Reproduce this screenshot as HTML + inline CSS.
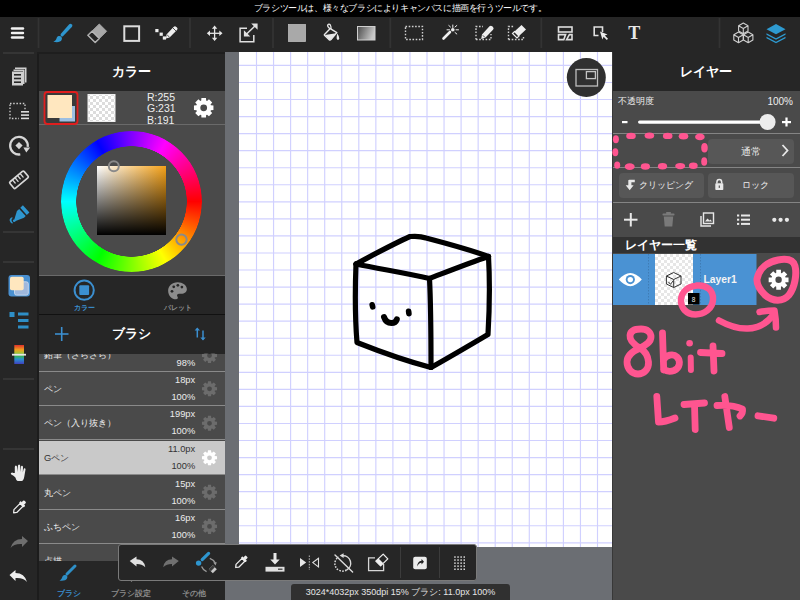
<!DOCTYPE html>
<html><head><meta charset="utf-8">
<style>
*{margin:0;padding:0;box-sizing:border-box}
html,body{width:800px;height:600px;overflow:hidden;background:#262626;font-family:"Liberation Sans",sans-serif;color:#fff}
.a{position:absolute}
svg{position:absolute;overflow:visible}
#status{left:0;top:0;width:800px;height:17px;background:#000;letter-spacing:-0.4px;font-size:8.7px;line-height:17px;text-align:center;color:#fff}
#toolbar{left:0;top:17px;width:800px;height:35px;background:#262626}
#sidebar{left:0;top:52px;width:38px;height:548px;background:#262626}
#lpanel{left:38px;top:52px;width:187px;height:548px;background:#4a4a4a;overflow:hidden}
#gutter{left:225px;top:52px;width:387px;height:548px;background:#6b6e73}
#canvas{left:239px;top:52px;width:373px;height:495px;background-color:#fff;overflow:hidden}
#grid{position:absolute;left:2px;top:0;width:371px;height:495px;
 background-image:linear-gradient(to right, #d0d0ff 1.5px, transparent 1.5px),linear-gradient(to bottom, #d0d0ff 1.5px, transparent 1.5px);
 background-size:17.05px 17.05px;background-position:14.75px 12.5px}
#rpanel{left:612px;top:52px;width:188px;height:548px;background:#4a4a4a;overflow:hidden}
.hdr{position:absolute;left:0;background:#262626;color:#fff;font-weight:bold;text-align:center}
.sep{position:absolute;left:0;height:1.4px;background:#848484}
.item{position:absolute;left:0;width:187px;height:34px;background:#4a4a4a;border-bottom:1px solid #8a8a8a;font-size:9.3px;color:#ececec}
.item.sel{background:#c9c9c9;color:#333}
.item .nm{position:absolute;left:6px;top:11px;white-space:nowrap}
.item .n1{position:absolute;right:29.8px;top:3px;text-align:right;font-size:9.3px}
.item .n2{position:absolute;right:29.8px;top:20px;text-align:right;font-size:9.3px}
.btn{position:absolute;background:#575757;border-radius:4px;font-size:11px;color:#eee}
#ftool{left:118px;top:544px;width:359px;height:37px;background:#262626;border:1px solid #7a7a7a;border-radius:3px;z-index:5}
#info{left:291px;top:584px;width:219px;height:16px;background:#303030;border-radius:3px 3px 0 0;font-size:9px;line-height:16px;text-align:center;color:#e6e6e6;z-index:5;white-space:nowrap}
#btabs{left:38px;top:561px;width:187px;height:39px;background:#262626}
</style></head><body>
<div id="status" class="a">ブラシツールは、様々なブラシによりキャンバスに描画を行うツールです。</div>
<div id="toolbar" class="a"></div>
<div id="sidebar" class="a"></div>
<div id="lpanel" class="a">
  <div class="hdr" style="top:0;width:187px;height:39px;font-size:13px;line-height:39px">カラー</div>
  <div class="sep" style="top:72px;width:187px;background:#6a6a6a"></div>
  <div class="a" style="left:109px;top:39.5px;font-size:10.5px;line-height:11.6px;color:#eee">R:255<br>G:231<br>B:191</div>
  <div class="hdr" style="top:224px;width:187px;height:38px;"></div>
  <div class="sep" style="top:223px;width:187px;background:#6a6a6a"></div>
  <div class="a" style="left:0;top:251px;width:93px;text-align:center;font-size:7.1px;font-weight:bold;color:#3b8fd0">カラー</div>
  <div class="a" style="left:93px;top:251px;width:94px;text-align:center;font-size:7.1px;font-weight:bold;color:#8c8c8c">パレット</div>
  <div class="sep" style="top:262px;width:187px;background:#111"></div>
  <div class="hdr" style="top:263px;width:187px;height:39px;font-size:12.5px;line-height:39px">ブラシ</div>
  <div class="a" style="left:0;top:302px;width:187px;height:207px;overflow:hidden">
  <div class="item" style="top:-16px"><span class="nm">鉛筆（さらさら）</span><span class="n2">98%</span></div>
  <div class="item" style="top:18px"><span class="nm">ペン</span><span class="n1">18px</span><span class="n2">100%</span></div>
  <div class="item" style="top:52px"><span class="nm">ペン（入り抜き）</span><span class="n1">199px</span><span class="n2">100%</span></div>
  <div class="item sel" style="top:87px"><span class="nm">Gペン</span><span class="n1">11.0px</span><span class="n2">100%</span></div>
  <div class="item" style="top:122px"><span class="nm">丸ペン</span><span class="n1">15px</span><span class="n2">100%</span></div>
  <div class="item" style="top:156px"><span class="nm">ふちペン</span><span class="n1">16px</span><span class="n2">100%</span></div>
  <div class="item" style="top:190px"><span class="nm">点描</span></div>
  </div>
</div>
<div id="btabs" class="a">
  <div class="a" style="left:0;top:28px;width:62px;text-align:center;font-size:7.5px;font-weight:bold;color:#3b8fd0">ブラシ</div>
  <div class="a" style="left:62px;top:28px;width:62px;text-align:center;font-size:7.5px;font-weight:bold;color:#8c8c8c">ブラシ設定</div>
  <div class="a" style="left:124px;top:28px;width:63px;text-align:center;font-size:7.5px;font-weight:bold;color:#8c8c8c">その他</div>
</div>
<div class="a" style="left:61px;top:131px;width:141px;height:141px;border-radius:50%;background:conic-gradient(hsl(270,100%,50%) 0deg,hsl(300,100%,50%) 30deg,hsl(330,100%,50%) 60deg,hsl(0,100%,50%) 90deg,hsl(30,100%,50%) 120deg,hsl(60,100%,50%) 150deg,hsl(90,100%,50%) 180deg,hsl(120,100%,50%) 210deg,hsl(150,100%,50%) 240deg,hsl(180,100%,50%) 270deg,hsl(210,100%,50%) 300deg,hsl(240,100%,50%) 330deg,hsl(270,100%,50%) 360deg);-webkit-mask:radial-gradient(circle,transparent 55px,#000 55.5px);mask:radial-gradient(circle,transparent 55px,#000 55.5px)"></div>
<div class="a" style="left:97px;top:166px;width:69px;height:69px;background:linear-gradient(to bottom,rgba(0,0,0,0),#000),linear-gradient(to right,#fff,#f5a219)"></div>
<div id="gutter" class="a"></div>
<div id="canvas" class="a"><svg width="373" height="495" style="position:absolute;left:0;top:0"><g stroke="#d0d0ff" stroke-width="1.15"><line x1="17.50" y1="0" x2="17.50" y2="495"/><line x1="34.55" y1="0" x2="34.55" y2="495"/><line x1="51.60" y1="0" x2="51.60" y2="495"/><line x1="68.65" y1="0" x2="68.65" y2="495"/><line x1="85.70" y1="0" x2="85.70" y2="495"/><line x1="102.75" y1="0" x2="102.75" y2="495"/><line x1="119.80" y1="0" x2="119.80" y2="495"/><line x1="136.85" y1="0" x2="136.85" y2="495"/><line x1="153.90" y1="0" x2="153.90" y2="495"/><line x1="170.95" y1="0" x2="170.95" y2="495"/><line x1="188.00" y1="0" x2="188.00" y2="495"/><line x1="205.05" y1="0" x2="205.05" y2="495"/><line x1="222.10" y1="0" x2="222.10" y2="495"/><line x1="239.15" y1="0" x2="239.15" y2="495"/><line x1="256.20" y1="0" x2="256.20" y2="495"/><line x1="273.25" y1="0" x2="273.25" y2="495"/><line x1="290.30" y1="0" x2="290.30" y2="495"/><line x1="307.35" y1="0" x2="307.35" y2="495"/><line x1="324.40" y1="0" x2="324.40" y2="495"/><line x1="341.45" y1="0" x2="341.45" y2="495"/><line x1="358.50" y1="0" x2="358.50" y2="495"/><line x1="0" y1="13.40" x2="373" y2="13.40"/><line x1="0" y1="30.45" x2="373" y2="30.45"/><line x1="0" y1="47.50" x2="373" y2="47.50"/><line x1="0" y1="64.55" x2="373" y2="64.55"/><line x1="0" y1="81.60" x2="373" y2="81.60"/><line x1="0" y1="98.65" x2="373" y2="98.65"/><line x1="0" y1="115.70" x2="373" y2="115.70"/><line x1="0" y1="132.75" x2="373" y2="132.75"/><line x1="0" y1="149.80" x2="373" y2="149.80"/><line x1="0" y1="166.85" x2="373" y2="166.85"/><line x1="0" y1="183.90" x2="373" y2="183.90"/><line x1="0" y1="200.95" x2="373" y2="200.95"/><line x1="0" y1="218.00" x2="373" y2="218.00"/><line x1="0" y1="235.05" x2="373" y2="235.05"/><line x1="0" y1="252.10" x2="373" y2="252.10"/><line x1="0" y1="269.15" x2="373" y2="269.15"/><line x1="0" y1="286.20" x2="373" y2="286.20"/><line x1="0" y1="303.25" x2="373" y2="303.25"/><line x1="0" y1="320.30" x2="373" y2="320.30"/><line x1="0" y1="337.35" x2="373" y2="337.35"/><line x1="0" y1="354.40" x2="373" y2="354.40"/><line x1="0" y1="371.45" x2="373" y2="371.45"/><line x1="0" y1="388.50" x2="373" y2="388.50"/><line x1="0" y1="405.55" x2="373" y2="405.55"/><line x1="0" y1="422.60" x2="373" y2="422.60"/><line x1="0" y1="439.65" x2="373" y2="439.65"/><line x1="0" y1="456.70" x2="373" y2="456.70"/><line x1="0" y1="473.75" x2="373" y2="473.75"/><line x1="0" y1="490.80" x2="373" y2="490.80"/></g></svg></div>
<div id="rpanel" class="a">
  <div class="hdr" style="top:0;width:188px;height:39px;font-size:13px;line-height:39px">レイヤー</div>
  <div class="a" style="left:6px;top:43px;font-size:9.3px;color:#eee">不透明度</div>
  <div class="a" style="right:7px;top:43.5px;font-size:10px;color:#eee">100%</div>
  <div class="sep" style="top:81px;width:188px"></div>
  <div class="btn" style="left:96px;top:87px;width:86px;height:25px;text-align:center;line-height:25px;font-size:10px">通常</div>
  <div class="sep" style="top:115px;width:188px"></div>
  <div class="btn" style="left:7px;top:121px;width:85px;height:25px;line-height:25px;font-size:9.3px;padding-left:20px;white-space:nowrap">クリッピング</div>
  <div class="btn" style="left:96px;top:121px;width:86px;height:25px;line-height:25px;font-size:9.3px;padding-left:34px">ロック</div>
  <div class="sep" style="top:150px;width:188px"></div>
  <div class="a" style="left:0;top:185px;width:188px;height:16px;background:#323232"></div>
  <div class="a" style="left:13px;top:185px;font-size:12.2px;font-weight:bold;color:#fff">レイヤー一覧</div>
  <div class="a" style="left:0;top:201.7px;width:145px;height:51.3px;background:#4a92d3"></div>
  <div class="a" style="left:42.5px;top:201.7px;width:38.8px;height:51.3px;background-color:#fff;background-image:linear-gradient(45deg,#e6e6e6 25%,transparent 25%,transparent 75%,#e6e6e6 75%),linear-gradient(45deg,#e6e6e6 25%,transparent 25%,transparent 75%,#e6e6e6 75%);background-size:6px 6px;background-position:0 0,3px 3px"></div>
  <div class="a" style="left:91.5px;top:222px;font-size:10.3px;font-weight:bold;color:#f4f4f4">Layer1</div>
</div>
<div class="a" style="left:612px;top:52px;width:1px;height:548px;background:#383838"></div>
<div class="a" style="left:37px;top:52px;width:1.5px;height:548px;background:#1c1c1c"></div>
<div class="a" style="left:37px;top:52px;width:188px;height:1.5px;background:#1e1e1e"></div>
<svg class="a" id="ov" width="800" height="600" style="left:0;top:0" viewBox="0 0 800 600">
<!-- toolbar separators -->
<g stroke="#333" stroke-width="1.8">
<line x1="38.5" y1="18" x2="38.5" y2="48"/><line x1="190" y1="18" x2="190" y2="48"/>
<line x1="273" y1="18" x2="273" y2="48"/><line x1="390.3" y1="18" x2="390.3" y2="48"/>
<line x1="541.3" y1="18" x2="541.3" y2="48"/><line x1="719.5" y1="18" x2="719.5" y2="48"/>
</g>
<!-- hamburger -->
<g stroke="#f2f2f2" stroke-width="2.4" stroke-linecap="round">
<line x1="12" y1="28.5" x2="23" y2="28.5"/><line x1="12" y1="33" x2="23" y2="33"/><line x1="12" y1="37.5" x2="23" y2="37.5"/>
</g>
<!-- brush blue -->
<g fill="#2e96cf">
<path d="M69.2 24.2 Q70.8 23.2 71.9 24.4 Q73 25.7 71.8 27 L63.2 36 Q62 37 61 36 Q60 35 60.9 33.8Z"/>
<path d="M58.8 36 C61.5 35.8 62.6 38 61.6 40 C60.6 42 57.5 42.7 53.3 41.7 C55.5 40.8 56.2 39.4 56.5 38.4 C56.9 37 57.6 36.1 58.8 36Z"/>
</g>
<!-- eraser -->
<path d="M99.3 24 L106.6 31.3 L99.3 38.6 L92 31.3Z" fill="#a8a8a8"/>
<path d="M92 31.3 L99.3 38.6 L95.2 42.5 L87.9 35.2Z" fill="none" stroke="#b8b8b8" stroke-width="1.4" stroke-linejoin="round"/>
<path d="M99.3 24 L106.6 31.3 L95.2 42.5 L87.9 35.2Z" fill="none" stroke="#a8a8a8" stroke-width="1" stroke-linejoin="round"/>
<!-- rectangle -->
<rect x="124.3" y="26.3" width="14.8" height="14.6" fill="none" stroke="#dcdcdc" stroke-width="2"/>
<!-- dotted + pen -->
<g fill="#eee">
<rect x="155.3" y="29" width="3.2" height="3.2"/><rect x="159.6" y="32.6" width="3.2" height="3.2"/><rect x="162.8" y="36.4" width="3.2" height="3.2"/>
<path d="M166.5 34.5 L173.8 26.8 Q175 25.6 176.3 26.9 L177 27.6 Q178.2 28.9 177 30.1 L169.6 37.6 L166 38.6Z" fill="#eee"/><line x1="167.2" y1="35" x2="169.6" y2="37.2" stroke="#262626" stroke-width="0.8"/><line x1="172.8" y1="27.8" x2="176" y2="31" stroke="#262626" stroke-width="0.8"/>
</g>
<!-- move -->
<g stroke="#e6e6e6" stroke-width="1.3" fill="none">
<line x1="209" y1="33.3" x2="220.5" y2="33.3"/><line x1="214.6" y1="27.5" x2="214.6" y2="39"/>
</g>
<g fill="#e6e6e6">
<path d="M206.8 33.3 L210 30.6 L210 36Z M222.5 33.3 L219.3 30.6 L219.3 36Z M214.6 25.6 L211.9 28.8 L217.3 28.8Z M214.6 41 L211.9 37.8 L217.3 37.8Z"/>
</g>
<!-- transform -->
<g stroke="#e0e0e0" stroke-width="1.5" fill="none">
<path d="M247 28.3 L240.1 28.3 L240.1 41.8 L253.8 41.8 L253.8 35"/>
<path d="M245 35.5 L256.5 24.5"/>
</g>
<g fill="#e0e0e0"><path d="M257.6 23.4 L257.6 29.8 L251.2 23.4Z M243.9 36.6 L243.9 30.2 L250.3 36.6Z"/></g>
<!-- gray square -->
<rect x="288.5" y="24.5" width="17" height="17" fill="#a9a9a9" stroke="#bbb" stroke-width="0.8"/>
<!-- bucket -->
<path d="M324.5 34.5 L330.3 28.6 L336.8 32.6 L331 39.6 Q330.2 40.4 329.2 39.8 L325 35.8 Q324 35 324.5 34.5Z" fill="none" stroke="#e8e8e8" stroke-width="1.4" stroke-linejoin="round"/>
<path d="M325 35 L336.2 33.2 L331 39.6 Q330.2 40.4 329.2 39.8Z" fill="#e8e8e8"/>
<path d="M330 28.8 Q327 26.5 327.8 24.8 Q329 23.3 330.3 25 Q331.2 26.5 331 29" fill="none" stroke="#e8e8e8" stroke-width="1.3"/>
<path d="M337.2 33.5 Q339.8 36.8 339.3 38.8 Q338.7 40.3 337.4 39.8 Q336.2 39 336.7 36.8Z" fill="#e8e8e8"/>
<!-- gradient -->
<defs><linearGradient id="gr" x1="0" x2="1" y1="0" y2="0.3"><stop offset="0" stop-color="#4a4a4a"/><stop offset="1" stop-color="#c8c8c8"/></linearGradient></defs>
<rect x="357.5" y="26.5" width="17.5" height="13.5" fill="url(#gr)" stroke="#cfcfcf" stroke-width="1"/>
<!-- dashed rect -->
<rect x="405.5" y="26.5" width="17" height="13" fill="none" stroke="#cfcfcf" stroke-width="1.4" stroke-dasharray="1.6 1.6"/>
<!-- wand -->
<g stroke="#eee" stroke-linecap="round">
<line x1="443.5" y1="38.5" x2="450" y2="32" stroke-width="2.6"/>
<g stroke-width="1"><line x1="452.8" y1="25" x2="452.8" y2="27.5"/><line x1="456" y1="29.8" x2="458.5" y2="29.8"/><line x1="447" y1="29.8" x2="449.5" y2="29.8"/><line x1="455" y1="27" x2="456.8" y2="25.5"/><line x1="455" y1="32.5" x2="456.8" y2="34"/><line x1="450.5" y1="27" x2="448.8" y2="25.5"/></g>
<circle cx="452.8" cy="29.8" r="1.8" fill="#eee" stroke="none"/>
</g>
<!-- select pen -->
<path d="M476 39.5 L476 26.5 L483 26.5 M476 39.5 L491 39.5 L491 34" fill="none" stroke="#cfcfcf" stroke-width="1.4" stroke-dasharray="1.6 1.6"/>
<path d="M482 34.5 L489.5 26.3 Q490.8 25 492.2 26.3 L493 27.1 Q494.3 28.5 493 29.8 L485.3 37.8 L481.2 39Z" fill="#eee"/><line x1="482.8" y1="35.3" x2="485" y2="37.5" stroke="#262626" stroke-width="0.8"/>
<!-- select eraser -->
<path d="M508.5 39.5 L508.5 26.5 L514 26.5 M508.5 39.5 L523.5 39.5 L523.5 36" fill="none" stroke="#cfcfcf" stroke-width="1.4" stroke-dasharray="1.6 1.6"/>
<path d="M521.5 25 L526 29.5 L519 36 L514.5 31.5Z" fill="#eee"/>
<path d="M514.5 31.5 L519 36 L517 38 L512.5 33.5Z" fill="none" stroke="#eee" stroke-width="1.2"/>
<!-- layout -->
<g fill="none" stroke="#dedede" stroke-width="1.6">
<rect x="558.5" y="27" width="13.5" height="5"/>
<path d="M558.5 34.6 L565.6 34.6 L563.8 39.6 L558.5 39.6Z M569.4 34.6 L572 34.6 L572 39.6 L566.6 39.6Z"/>
</g>
<!-- select arrow -->
<path d="M599.5 27 L594.2 27 L594.2 35.5 L598.5 35.5 M602.5 32 L602.5 27 L599.5 27" fill="none" stroke="#e0e0e0" stroke-width="1.6"/>
<path d="M600 31.5 L607.5 34.5 L604.8 35.6 L608 38.8 L606.8 40 L603.6 36.8 L602.4 39.5Z" fill="#eee"/>
<!-- T -->
<text x="634.3" y="39" font-family="Liberation Serif" font-weight="bold" font-size="18" fill="#e8e8e8" text-anchor="middle">T</text>
<!-- cubes -->
<g fill="none" stroke="#cfcfcf" stroke-width="1.1" stroke-linejoin="round">
<path d="M743.3 23 L748 25.7 L748 31 L743.3 33.7 L738.6 31 L738.6 25.7Z M738.6 25.7 L743.3 28.4 L748 25.7 M743.3 28.4 L743.3 33.7"/>
<path d="M738.5 32 L743.2 34.7 L743.2 40 L738.5 42.7 L733.8 40 L733.8 34.7Z M733.8 34.7 L738.5 37.4 L743.2 34.7 M738.5 37.4 L738.5 42.7"/>
<path d="M748.2 32 L752.9 34.7 L752.9 40 L748.2 42.7 L743.5 40 L743.5 34.7Z M743.5 34.7 L748.2 37.4 L752.9 34.7 M748.2 37.4 L748.2 42.7"/>
</g>
<!-- layers blue -->
<g fill="#2e9ad0">
<path d="M776 24 L785.5 29.2 L776 34.2 L766.5 29.2Z"/>
<path d="M766.5 33.3 L776 38.3 L785.5 33.3 L785.5 34.8 L776 39.8 L766.5 34.8Z"/>
<path d="M766.5 36.8 L776 41.8 L785.5 36.8 L785.5 38.3 L776 43.3 L766.5 38.3Z"/>
</g>
<!-- sidebar separators -->
<g fill="#353535">
<rect x="3" y="52" width="31" height="2"/>
<rect x="3" y="231" width="31" height="2"/><rect x="3" y="261" width="31" height="2"/>
<rect x="3" y="378" width="31" height="2"/><rect x="3" y="448" width="31" height="2"/>
</g>
<!-- pages icon -->
<g fill="#cfcfcf">
<path d="M15 67.5 L26.5 67.5 L26.5 82.5 L25 82.5 L25 69 L15 69Z"/>
<path d="M13.5 69.5 L24.5 69.5 L24.5 84 L23 84 L23 71 L13.5 71Z"/>
<rect x="12" y="71.5" width="11" height="14"/>
</g>
<g fill="#262626"><rect x="14" y="74" width="7" height="1.6"/><rect x="14" y="77.7" width="7" height="1.6"/><rect x="14" y="81.4" width="7" height="1.6"/></g>
<!-- selection list icon -->
<rect x="10" y="103.5" width="15" height="15" fill="none" stroke="#cfcfcf" stroke-width="1.3" stroke-dasharray="1.5 1.7"/>
<rect x="19" y="110" width="10" height="10" fill="#262626"/>
<g fill="#dcdcdc"><rect x="21" y="111" width="8" height="1.6"/><rect x="21" y="114.3" width="8" height="1.6"/><rect x="21" y="117.6" width="8" height="1.6"/></g>
<!-- rotate icon -->
<path d="M20.3 154.4 A8.8 8.8 0 1 1 27.7 146.8" fill="none" stroke="#d6d6d6" stroke-width="2.3"/>
<path d="M23.4 147.6 L30.2 147.6 L26.3 152.6Z" fill="#d6d6d6"/>
<path d="M19 142 L22.6 145.6 L19 149.2 L15.4 145.6Z" fill="#d6d6d6"/>
<!-- ruler -->
<g transform="translate(19 179.8) rotate(-40)">
<rect x="-9.3" y="-4.2" width="18.6" height="8.4" rx="1.3" fill="none" stroke="#d8d8d8" stroke-width="1.7"/>
<g stroke="#d8d8d8" stroke-width="1.3" stroke-linecap="round"><line x1="-5" y1="-3.5" x2="-5" y2="0"/><line x1="-1.7" y1="-3.5" x2="-1.7" y2="0.6"/><line x1="1.6" y1="-3.5" x2="1.6" y2="0"/><line x1="4.9" y1="-3.5" x2="4.9" y2="0.6"/></g>
</g>
<!-- pen marker blue -->
<g fill="#2e96cf" transform="translate(-0.3 1.2)">
<path d="M17.2 209.8 L19.5 207.8 L26 214.8 L24.3 216.6 L15.3 220 L14.4 219Z"/>
<path d="M20.6 206.6 L23.2 204 L29.7 211.2 L27.1 213.8Z"/>
<circle cx="14.5" cy="219.6" r="1.3"/>
<path d="M12.5 216 Q9.5 217 10 219.5 Q10.6 221.5 12.5 222.5 L13.2 221.6 Q11.8 220.2 11.8 218.8 Q11.9 217.5 13 216.8Z"/>
</g>
<!-- color icon -->
<rect x="8.5" y="275" width="21.5" height="21.5" rx="3" fill="#4a90d0"/>
<rect x="14.5" y="281.8" width="13.8" height="13.3" rx="2" fill="#9fb8dd" stroke="#c9daf0" stroke-width="0.9"/>
<rect x="10" y="276.7" width="13.7" height="13.6" rx="1.8" fill="#ffe7bf"/>
<!-- list icon -->
<g fill="#2e8fc7">
<rect x="9.5" y="312" width="5" height="5"/>
<rect x="18" y="312.5" width="10.5" height="3"/><rect x="18" y="319" width="10.5" height="3"/><rect x="18" y="325.5" width="10.5" height="3"/>
</g>
<!-- rainbow -->
<defs><linearGradient id="rb" x1="0" x2="0" y1="0" y2="1">
<stop offset="0" stop-color="#e0302a"/><stop offset="0.25" stop-color="#f0a020"/><stop offset="0.4" stop-color="#b0c030"/><stop offset="0.6" stop-color="#30b060"/><stop offset="0.75" stop-color="#2a90d0"/><stop offset="1" stop-color="#4040c0"/></linearGradient></defs>
<rect x="14.3" y="345" width="9.7" height="19" fill="url(#rb)"/>
<rect x="12" y="353.8" width="14" height="1.8" fill="#e8e8e8"/>
<!-- hand -->
<path d="M14.8 473 L14.8 467.2 Q14.8 465.6 15.9 465.6 Q17 465.6 17.1 467.2 L17.5 472 L17.9 466 Q18 464.4 19.1 464.4 Q20.2 464.4 20.2 466 L20.3 472 L20.9 467.2 Q21.1 465.7 22.1 465.8 Q23.1 465.9 23 467.3 L22.8 472.5 L23.6 469.2 Q23.9 468 24.8 468.2 Q25.7 468.4 25.5 469.6 L24.3 476.5 Q23.6 480.8 21.6 481 L17.6 481 Q16.1 480.6 15.4 477.6 Q13.6 475.4 11.3 474.4 Q10.3 473.7 11.1 472.9 Q12 472.3 13.3 472.9Z" fill="#ececec"/>
<!-- eyedropper sidebar -->
<g transform="translate(19.1 507.3) rotate(45) scale(0.88)">
<path d="M-2.3 -4 L2.3 -4 L2.3 6 L0 8.8 L-2.3 6Z" fill="none" stroke="#eee" stroke-width="1.4" stroke-linejoin="round"/>
<rect x="-3.8" y="-6.2" width="7.6" height="2.6" rx="0.8" fill="#eee"/>
<rect x="-2" y="-9.6" width="4" height="4" rx="1.2" fill="#eee"/>
</g>
<!-- redo gray -->
<path d="M28 541 L22 536 L22 539 Q13 539 10.5 548 Q14 543.5 22 544 L22 547Z" fill="#6e6e6e"/>
<!-- undo white -->
<path d="M9.5 575 L15.5 570 L15.5 573 Q24.5 573 27 582 Q23.5 577.5 15.5 578 L15.5 581Z" fill="#eeeeee"/>
<!-- color swatch -->
<rect x="44.5" y="92" width="33" height="32" rx="3" fill="#3a3a3a" stroke="#e01e1e" stroke-width="1.8"/>
<rect x="59.5" y="106" width="15.5" height="15.5" fill="#9dbfe2"/>
<rect x="47.5" y="95" width="24.5" height="23" fill="#ffe7bf"/>
<!-- transparent swatch -->
<defs><pattern id="chk" width="6" height="6" patternUnits="userSpaceOnUse"><rect width="6" height="6" fill="#fff"/><rect width="3" height="3" fill="#dcdcdc"/><rect x="3" y="3" width="3" height="3" fill="#dcdcdc"/></pattern></defs>
<rect x="88" y="94.5" width="27" height="27" fill="url(#chk)" stroke="#f0f0f0" stroke-width="1"/>
<!-- gear color -->
<g id="gear" transform="translate(203.7 107.8)">
<path fill="#fff" d="M-1.8 -9.5 L1.8 -9.5 L2.4 -6.8 L4.6 -5.9 L6.9 -7.4 L9.4 -4.9 L7.9 -2.6 L8.8 -0.4 L11.5 0.2 L11.5 0 Z" opacity="0"/>
</g>
<!-- color wheel -->
<circle cx="113.8" cy="166.3" r="5" fill="none" stroke="#8a8a8a" stroke-width="2"/>
<circle cx="181.5" cy="239.6" r="5.2" fill="none" stroke="#8a8a8a" stroke-width="2"/>
<!-- tab icons -->
<circle cx="84.2" cy="290.2" r="9.6" fill="none" stroke="#3b8fd0" stroke-width="2"/>
<rect x="79.3" y="285.3" width="9.8" height="9.8" rx="1" fill="#3b8fd0"/>
<g transform="translate(177.5 290.8) scale(0.86) translate(-177.9 -290.9)"><path d="M178 281 C171.5 281 167 285.5 167 290.8 C167 296.5 171.5 300.8 176 300.8 C178.5 300.8 178.8 299 177.8 297.6 C176.8 296 177.5 294.2 179.8 294.2 L182.3 294.2 C186 294.2 188.8 292.2 188.8 289 C188.8 284.5 184 281 178 281Z" fill="#8c8c8c"/>
<g fill="#262626"><circle cx="171.5" cy="291.5" r="1.6"/><circle cx="173.5" cy="286.2" r="1.6"/><circle cx="178.3" cy="284.5" r="1.6"/><circle cx="183" cy="286.5" r="1.6"/></g></g>
<!-- brush header icons -->
<g stroke="#3b8fd0" stroke-width="1.6" fill="none">
<line x1="55" y1="334" x2="68.5" y2="334"/><line x1="61.7" y1="327" x2="61.7" y2="341"/>
<path d="M197.3 337.5 L197.3 328.5 M203 330.5 L203 339.5" stroke-width="1.5"/>
</g>
<g fill="#3b8fd0"><path d="M197.3 327.4 L194.6 330.6 L200 330.6Z M203 340.6 L200.3 337.4 L205.7 337.4Z"/></g>
<!-- bottom brush tab icon -->
<g fill="#2e8fc7">
<line x1="75" y1="566" x2="67" y2="574" stroke="#2e8fc7" stroke-width="3" stroke-linecap="round"/>
<path d="M64.5 575 C67 574.5 68 576.5 67 578.5 C66 580.5 63 581 59.5 580.5 C61.5 579.5 62 578 62.3 577 C62.7 576 63.3 575.2 64.5 575Z"/>
</g>
<path d="M129 579 L134 579 L131.5 582Z" fill="#8c8c8c"/>
<!-- canvas nav button -->
<circle cx="586.3" cy="77.5" r="19.5" fill="#303030"/>
<rect x="576" y="69.5" width="21.5" height="16.5" fill="none" stroke="#bdbdbd" stroke-width="1.3"/>
<rect x="586.4" y="71.6" width="9" height="7" fill="none" stroke="#c4c4c4" stroke-width="1.3"/>
<!-- cube drawing -->
<g fill="none" stroke="#000" stroke-width="5.2" stroke-linecap="round" stroke-linejoin="round">
<path d="M356 264 C375 254 393 244 410 236.5 C416 236 422 236.5 426 238 C447 243.5 468 249 488.5 256.5"/>
<path d="M356 264 C380 269 405 273 429.5 278.5 C449 271 469 263 488.5 256.5"/>
<path d="M356 264 C355 290 355 318 357 342.5 C381 352 406 361 431 367.5 C450 357 470 345 488 334.5 C489.5 309 490 283 488.5 256.5"/>
<path d="M429.5 278.5 C431 308 431 338 431 367.5"/>
</g>
<g stroke="#000" stroke-width="5.6" stroke-linecap="round" fill="none">
<line x1="372.2" y1="304.8" x2="372.7" y2="306.9"/>
<line x1="408.6" y1="311.2" x2="408.9" y2="313.6"/>
<path d="M384 317 Q386 323 391.5 323 Q395.5 323 396.8 319.4" stroke-width="6"/>
</g>
<!-- right panel: slider -->
<g fill="#fff">
<rect x="622" y="121" width="5.5" height="2.2"/>
<rect x="638" y="120.4" width="130" height="3.4" rx="1.7"/>
<rect x="782" y="121" width="9" height="2.2"/><rect x="785.4" y="117.5" width="2.2" height="9"/>
</g>
<circle cx="767.6" cy="122" r="8" fill="#ececec"/>
<path d="M782.5 145 L787.5 150.5 L782.5 156" fill="none" stroke="#e8e8e8" stroke-width="1.8"/>
<!-- clipping arrow icon -->
<path d="M628.3 180.3 Q628.5 179.8 629.5 179.8 L634.8 179.8 L634.8 182.3 L631.4 182.3 L631.4 185.2 L633.6 185.2 L629.7 190.3 L625.7 185.2 L628.3 185.2Z" fill="#e8e8e8"/>
<!-- lock -->
<rect x="715.3" y="183.2" width="8" height="6.8" rx="0.8" fill="#e8e8e8"/>
<path d="M716.9 183.5 L716.9 182.2 Q716.9 179.6 719.3 179.6 Q721.7 179.6 721.7 182.2 L721.7 183.5" fill="none" stroke="#e8e8e8" stroke-width="1.5"/>
<rect x="718.7" y="185.5" width="1.2" height="2.4" fill="#575757"/>
<!-- icon row -->
<g stroke="#e8e8e8" stroke-width="2">
<line x1="624" y1="219.7" x2="637.5" y2="219.7"/><line x1="630.8" y1="213" x2="630.8" y2="226.5"/>
</g>
<g fill="#7a7a7a">
<rect x="662.5" y="213.5" width="12" height="2" rx="0.8"/><rect x="666" y="212" width="5" height="2" rx="0.8"/>
<path d="M663.8 216.5 L673.2 216.5 L672.3 226.5 L664.7 226.5Z"/>
</g>
<g fill="none" stroke="#e8e8e8" stroke-width="1.4">
<path d="M701 216 L701 226 L711 226"/>
<rect x="703.5" y="213" width="10" height="10.5"/>
</g>
<path d="M705 221.5 L707.5 218.5 L709.5 220.5 L710.5 219.5 L712 221.5Z" fill="#e8e8e8"/>
<g fill="#e8e8e8">
<rect x="737" y="214.5" width="2.2" height="2"/><rect x="737" y="218.7" width="2.2" height="2"/><rect x="737" y="222.9" width="2.2" height="2"/>
<rect x="741" y="214.5" width="9" height="2"/><rect x="741" y="218.7" width="9" height="2"/><rect x="741" y="222.9" width="9" height="2"/>
<circle cx="774.3" cy="219.8" r="2.1"/><circle cx="780.6" cy="219.8" r="2.1"/><circle cx="786.9" cy="219.8" r="2.1"/>
</g>
<!-- layer row extras -->
<rect x="756.5" y="253" width="43.5" height="52" fill="#4a4a4a"/>
<g stroke="#3f7cb5" stroke-width="1" stroke-dasharray="1.5 1.5"><line x1="648.5" y1="254" x2="648.5" y2="305"/><line x1="700.5" y1="254" x2="700.5" y2="305"/></g>
<path d="M618.8 279.6 Q630.3 266.5 641.8 279.6 Q630.3 292.7 618.8 279.6Z" fill="#fff"/>
<circle cx="630.3" cy="279.6" r="4.6" fill="#4a92d3"/>
<circle cx="630.3" cy="279.6" r="2.7" fill="#fff"/>
<g fill="none" stroke="#333" stroke-width="1" stroke-linejoin="round">
<path d="M673.7 272.5 L681 276 L681 284 L673.7 287.5 L666.4 284 L666.4 276 Z M666.4 276 L673.7 279.5 L681 276 M673.7 279.5 L673.7 287.5"/>
<path d="M668.5 282 L670.5 284.3 L673 281"/>
</g>
<rect x="688" y="293" width="11.5" height="11.5" fill="#000"/>
<text x="693.6" y="301.8" font-size="6.5" fill="#eee" text-anchor="middle">8</text>
<path fill-rule="evenodd" fill="#fff" d="M210.89 105.34 L213.44 105.52 L213.44 110.08 L210.89 110.26 L210.53 111.14 L212.20 113.07 L208.97 116.30 L207.04 114.63 L206.16 114.99 L205.98 117.54 L201.42 117.54 L201.24 114.99 L200.36 114.63 L198.43 116.30 L195.20 113.07 L196.87 111.14 L196.51 110.26 L193.96 110.08 L193.96 105.52 L196.51 105.34 L196.87 104.46 L195.20 102.53 L198.43 99.30 L200.36 100.97 L201.24 100.61 L201.42 98.06 L205.98 98.06 L206.16 100.61 L207.04 100.97 L208.97 99.30 L212.20 102.53 L210.53 104.46Z M200.30 107.80 a3.40 3.40 0 1 0 6.80 0 a3.40 3.40 0 1 0 -6.80 0Z"/>
<path fill-rule="evenodd" fill="#fff" d="M785.51 277.43 L788.53 277.47 L788.53 282.13 L785.51 282.17 L785.16 283.01 L787.27 285.18 L783.98 288.47 L781.81 286.36 L780.97 286.71 L780.93 289.73 L776.27 289.73 L776.23 286.71 L775.39 286.36 L773.22 288.47 L769.93 285.18 L772.04 283.01 L771.69 282.17 L768.67 282.13 L768.67 277.47 L771.69 277.43 L772.04 276.59 L769.93 274.42 L773.22 271.13 L775.39 273.24 L776.23 272.89 L776.27 269.87 L780.93 269.87 L780.97 272.89 L781.81 273.24 L783.98 271.13 L787.27 274.42 L785.16 276.59Z M775.40 279.80 a3.20 3.20 0 1 0 6.40 0 a3.20 3.20 0 1 0 -6.40 0Z"/>
<defs><clipPath id="lc"><rect x="38" y="353.5" width="187" height="207.5"/></clipPath></defs><g clip-path="url(#lc)"><path fill-rule="evenodd" fill="#6c6c6c" d="M214.91 353.71 L217.05 353.97 L217.05 357.03 L214.91 357.29 L214.59 358.06 L215.92 359.75 L213.75 361.92 L212.06 360.59 L211.29 360.91 L211.03 363.05 L207.97 363.05 L207.71 360.91 L206.94 360.59 L205.25 361.92 L203.08 359.75 L204.41 358.06 L204.09 357.29 L201.95 357.03 L201.95 353.97 L204.09 353.71 L204.41 352.94 L203.08 351.25 L205.25 349.08 L206.94 350.41 L207.71 350.09 L207.97 347.95 L211.03 347.95 L211.29 350.09 L212.06 350.41 L213.75 349.08 L215.92 351.25 L214.59 352.94Z M207.10 355.50 a2.40 2.40 0 1 0 4.80 0 a2.40 2.40 0 1 0 -4.80 0Z"/>
<path fill-rule="evenodd" fill="#6c6c6c" d="M214.91 387.01 L217.05 387.27 L217.05 390.33 L214.91 390.59 L214.59 391.36 L215.92 393.05 L213.75 395.22 L212.06 393.89 L211.29 394.21 L211.03 396.35 L207.97 396.35 L207.71 394.21 L206.94 393.89 L205.25 395.22 L203.08 393.05 L204.41 391.36 L204.09 390.59 L201.95 390.33 L201.95 387.27 L204.09 387.01 L204.41 386.24 L203.08 384.55 L205.25 382.38 L206.94 383.71 L207.71 383.39 L207.97 381.25 L211.03 381.25 L211.29 383.39 L212.06 383.71 L213.75 382.38 L215.92 384.55 L214.59 386.24Z M207.10 388.80 a2.40 2.40 0 1 0 4.80 0 a2.40 2.40 0 1 0 -4.80 0Z"/>
<path fill-rule="evenodd" fill="#6c6c6c" d="M214.91 421.51 L217.05 421.77 L217.05 424.83 L214.91 425.09 L214.59 425.86 L215.92 427.55 L213.75 429.72 L212.06 428.39 L211.29 428.71 L211.03 430.85 L207.97 430.85 L207.71 428.71 L206.94 428.39 L205.25 429.72 L203.08 427.55 L204.41 425.86 L204.09 425.09 L201.95 424.83 L201.95 421.77 L204.09 421.51 L204.41 420.74 L203.08 419.05 L205.25 416.88 L206.94 418.21 L207.71 417.89 L207.97 415.75 L211.03 415.75 L211.29 417.89 L212.06 418.21 L213.75 416.88 L215.92 419.05 L214.59 420.74Z M207.10 423.30 a2.40 2.40 0 1 0 4.80 0 a2.40 2.40 0 1 0 -4.80 0Z"/>
<path fill-rule="evenodd" fill="#ffffff" d="M214.91 456.01 L217.05 456.27 L217.05 459.33 L214.91 459.59 L214.59 460.36 L215.92 462.05 L213.75 464.22 L212.06 462.89 L211.29 463.21 L211.03 465.35 L207.97 465.35 L207.71 463.21 L206.94 462.89 L205.25 464.22 L203.08 462.05 L204.41 460.36 L204.09 459.59 L201.95 459.33 L201.95 456.27 L204.09 456.01 L204.41 455.24 L203.08 453.55 L205.25 451.38 L206.94 452.71 L207.71 452.39 L207.97 450.25 L211.03 450.25 L211.29 452.39 L212.06 452.71 L213.75 451.38 L215.92 453.55 L214.59 455.24Z M207.10 457.80 a2.40 2.40 0 1 0 4.80 0 a2.40 2.40 0 1 0 -4.80 0Z"/>
<path fill-rule="evenodd" fill="#6c6c6c" d="M214.91 490.51 L217.05 490.77 L217.05 493.83 L214.91 494.09 L214.59 494.86 L215.92 496.55 L213.75 498.72 L212.06 497.39 L211.29 497.71 L211.03 499.85 L207.97 499.85 L207.71 497.71 L206.94 497.39 L205.25 498.72 L203.08 496.55 L204.41 494.86 L204.09 494.09 L201.95 493.83 L201.95 490.77 L204.09 490.51 L204.41 489.74 L203.08 488.05 L205.25 485.88 L206.94 487.21 L207.71 486.89 L207.97 484.75 L211.03 484.75 L211.29 486.89 L212.06 487.21 L213.75 485.88 L215.92 488.05 L214.59 489.74Z M207.10 492.30 a2.40 2.40 0 1 0 4.80 0 a2.40 2.40 0 1 0 -4.80 0Z"/>
<path fill-rule="evenodd" fill="#6c6c6c" d="M214.91 524.61 L217.05 524.87 L217.05 527.93 L214.91 528.19 L214.59 528.96 L215.92 530.65 L213.75 532.82 L212.06 531.49 L211.29 531.81 L211.03 533.95 L207.97 533.95 L207.71 531.81 L206.94 531.49 L205.25 532.82 L203.08 530.65 L204.41 528.96 L204.09 528.19 L201.95 527.93 L201.95 524.87 L204.09 524.61 L204.41 523.84 L203.08 522.15 L205.25 519.98 L206.94 521.31 L207.71 520.99 L207.97 518.85 L211.03 518.85 L211.29 520.99 L212.06 521.31 L213.75 519.98 L215.92 522.15 L214.59 523.84Z M207.10 526.40 a2.40 2.40 0 1 0 4.80 0 a2.40 2.40 0 1 0 -4.80 0Z"/></g>
<!-- pink annotations -->
<g fill="#ff5590">
<ellipse cx="631" cy="135.9" rx="4.8" ry="3.2"/><ellipse cx="649.4" cy="135.6" rx="4.8" ry="3.2"/><ellipse cx="667.7" cy="135.9" rx="4.8" ry="3.2"/><ellipse cx="683.5" cy="136.3" rx="4.8" ry="3.2"/><ellipse cx="699.9" cy="136.9" rx="4.8" ry="3.4"/>
<ellipse cx="615.9" cy="139.2" rx="3" ry="4"/><ellipse cx="615.3" cy="152.3" rx="3" ry="4"/><ellipse cx="617.2" cy="165.2" rx="3" ry="3.6"/>
<ellipse cx="704.5" cy="147.7" rx="3.3" ry="4.8"/><ellipse cx="704.2" cy="161.5" rx="3" ry="4.3"/>
<ellipse cx="629.7" cy="166.7" rx="5" ry="3.4"/><ellipse cx="645.4" cy="166.5" rx="4.6" ry="3.2"/><ellipse cx="662.5" cy="166.3" rx="4.6" ry="3.2"/><ellipse cx="680.2" cy="166.1" rx="5" ry="3.2"/><ellipse cx="693.3" cy="165.8" rx="4.4" ry="3.2"/>
</g>
<g fill="none" stroke="#ff5590" stroke-width="6.5" stroke-linecap="round" stroke-linejoin="round">
<path d="M697 285.5 C707 284.5 713.5 291 713 299.5 C712.5 309 704 314.5 695.5 314.5 C686 314.5 680.5 307.5 681 299.5 C681.5 292 687.5 286.5 697 285.5"/>
<path d="M757 279 C759 268 768 262 778 260 C786 258.5 793 259 795 266 C797 274 795 287 789 295 C783 302 773 302 765 295 C760 290 756.5 285 757 279Z" stroke-width="7"/>
<path d="M719 320.5 C729 326 738 329 748 328.5 C760 328 768 322 773.5 314.5"/>
<path d="M759.5 312 C765 311 770 310.5 774.5 310.5 C775.5 316 776 322 776 327.5"/>
<!-- 8 -->
<path d="M640 348 C633 344 629.5 340 630 335.5 C630.5 331 635 329 641 329 C647 329 651 332 651 337 C651 342 646 345 640 348 C633 351 627 356 627 362 C627 369 632 374 638 374 C644 374 649 369 648.5 362 C648 356 645 351 640 348Z" stroke-width="6.8"/>
<!-- b -->
<path d="M662.5 333 L663.7 370 M663.5 360 C666 355 673 353 677 357 C681 361 680 368 674 370.5 C670 372 666 371 663.7 369" stroke-width="6.8"/>
<!-- i -->
<path d="M690.7 357.5 L690.9 370" stroke-width="6"/>
<!-- t -->
<path d="M713 346 L714 371 M700.5 352.5 L722 353.5" stroke-width="6.8"/>
<!-- レ -->
<path d="M656.8 396.5 L658.5 422 C664 422 670 420 675 418" stroke-width="6.8"/>
<!-- T -->
<path d="M684 404.5 L704.5 403 M694.5 404.5 L695.2 429.5" stroke-width="6.8"/>
<!-- ヤ -->
<path d="M717 405.5 C726 405 736 406 742.5 409 C743 412 741.5 414.5 740 416 M724.8 396.5 L729.3 427.5" stroke-width="6.8"/>
<!-- ー -->
<path d="M758 415.8 L773.8 418.2" stroke-width="6.8"/>
</g>
<circle cx="689.6" cy="343.2" r="3.3" fill="#ff5590"/>
</svg>
<div id="ftool" class="a"></div>
<svg class="a" width="800" height="600" style="left:0;top:0;z-index:6" viewBox="0 0 800 600">
<!-- floating toolbar icons (page coords) -->
<path d="M129.7 561 L136.5 556.5 L136.5 559.3 Q144 559.3 145.3 567.2 Q141.5 563.8 136.5 564 L136.5 566.5Z" fill="#e0e0e0"/>
<path d="M178.8 561 L172 556.5 L172 559.3 Q164.5 559.3 163.2 567.2 Q167 563.8 172 564 L172 566.5Z" fill="#707070"/>
<line x1="208.6" y1="553.4" x2="202.2" y2="559.6" stroke="#2e96cf" stroke-width="3.2" stroke-linecap="round"/>
<circle cx="198.6" cy="563.1" r="2.7" fill="#2e96cf"/>
<path d="M209.8 558.3 Q213.8 559.8 215.3 563" fill="none" stroke="#9a9a9a" stroke-width="1.3"/>
<path d="M213.2 562.6 L216.8 562.2 L215.6 565.4Z" fill="#9a9a9a"/>
<path d="M201.6 566.4 Q203 570 206.6 571.6" fill="none" stroke="#9a9a9a" stroke-width="1.3"/>
<path d="M212.8 565.3 L216.8 569.3 L212.8 573.3 L208.8 569.3Z" fill="#c8c8c8"/>
<path d="M212.8 565.3 L214.8 567.3 L210.8 571.3 L208.8 569.3Z" fill="#3a3a3a"/>
<g transform="translate(241 562.2) rotate(45) scale(0.85)">
<path d="M-2.3 -4 L2.3 -4 L2.3 6 L0 8.8 L-2.3 6Z" fill="none" stroke="#eee" stroke-width="1.5" stroke-linejoin="round"/>
<rect x="-3.8" y="-6.2" width="7.6" height="2.6" rx="0.8" fill="#eee"/>
<rect x="-2" y="-9.6" width="4" height="4" rx="1.2" fill="#eee"/>
</g>
<path d="M273.5 553 L276.5 553 L276.5 559.5 L279.7 559.5 L275 564.5 L270.3 559.5 L273.5 559.5Z" fill="#e8e8e8"/>
<rect x="265.5" y="566.8" width="19" height="4.8" fill="#e0e0e0"/>
<rect x="278" y="568.6" width="4.5" height="1.2" fill="#333"/>
<path d="M300 558 L306.2 562.6 L300 567Z" fill="#e8e8e8"/>
<line x1="309.3" y1="555.5" x2="309.3" y2="570" stroke="#bbb" stroke-width="1" stroke-dasharray="1.5 1.3"/>
<path d="M318.5 558.3 L312.8 562.6 L318.5 567Z" fill="none" stroke="#e0e0e0" stroke-width="1.1"/>
<path d="M342.5 555.8 A7.5 7.5 0 0 1 346.5 570" fill="none" stroke="#dcdcdc" stroke-width="1.4"/>
<path d="M346.5 570 A7.5 7.5 0 0 1 338.5 557" fill="none" stroke="#dcdcdc" stroke-width="1.5" stroke-dasharray="1.6 1.3"/>
<path d="M339.6 555.6 L343.6 553.2 L343.6 558Z" fill="#dcdcdc"/>
<line x1="335" y1="555" x2="352.6" y2="572" stroke="#dcdcdc" stroke-width="1.4" stroke-linecap="round"/>
<path d="M375 557.8 L368.6 557.8 L368.6 570.6 L383.6 570.6 L383.6 564" fill="none" stroke="#d6d6d6" stroke-width="1.3"/>
<path d="M375.8 561.1 L383.2 554.1 L387.8 558.9 L380.6 565.9Z" fill="#262626" stroke="#eee" stroke-width="1.3" stroke-linejoin="round"/>
<path d="M375.8 561.1 L378.6 558.4 L383.3 563.3 L380.6 565.9Z" fill="#eee"/>
<g stroke="#3c3c3c" stroke-width="1"><line x1="400.5" y1="547" x2="400.5" y2="578"/><line x1="439.5" y1="547" x2="439.5" y2="578"/></g>
<rect x="413.2" y="556.8" width="13.6" height="12.5" rx="2" fill="#ececec"/>
<path d="M417 566.5 Q417.5 561.5 421.5 560.8 L421.5 559 L424 561.8 L421.5 564.5 L421.5 562.8 Q418.8 563 417 566.5Z" fill="#222"/>
<g fill="#d8d8d8">
<rect x="454.2" y="556.3" width="1.5" height="1.5"/><rect x="454.2" y="559.3" width="1.5" height="1.5"/><rect x="454.2" y="562.4" width="1.5" height="1.5"/><rect x="454.2" y="565.4" width="1.5" height="1.5"/><rect x="454.2" y="568.5" width="1.5" height="1.5"/><rect x="457.3" y="556.3" width="1.5" height="1.5"/><rect x="457.3" y="559.3" width="1.5" height="1.5"/><rect x="457.3" y="562.4" width="1.5" height="1.5"/><rect x="457.3" y="565.4" width="1.5" height="1.5"/><rect x="457.3" y="568.5" width="1.5" height="1.5"/><rect x="460.4" y="556.3" width="1.5" height="1.5"/><rect x="460.4" y="559.3" width="1.5" height="1.5"/><rect x="460.4" y="562.4" width="1.5" height="1.5"/><rect x="460.4" y="565.4" width="1.5" height="1.5"/><rect x="460.4" y="568.5" width="1.5" height="1.5"/><rect x="463.5" y="556.3" width="1.5" height="1.5"/><rect x="463.5" y="559.3" width="1.5" height="1.5"/><rect x="463.5" y="562.4" width="1.5" height="1.5"/><rect x="463.5" y="565.4" width="1.5" height="1.5"/><rect x="463.5" y="568.5" width="1.5" height="1.5"/>
</g>
</svg>
<div id="info" class="a">3024*4032px 350dpi 15% ブラシ: 11.0px 100%</div>
</body></html>
